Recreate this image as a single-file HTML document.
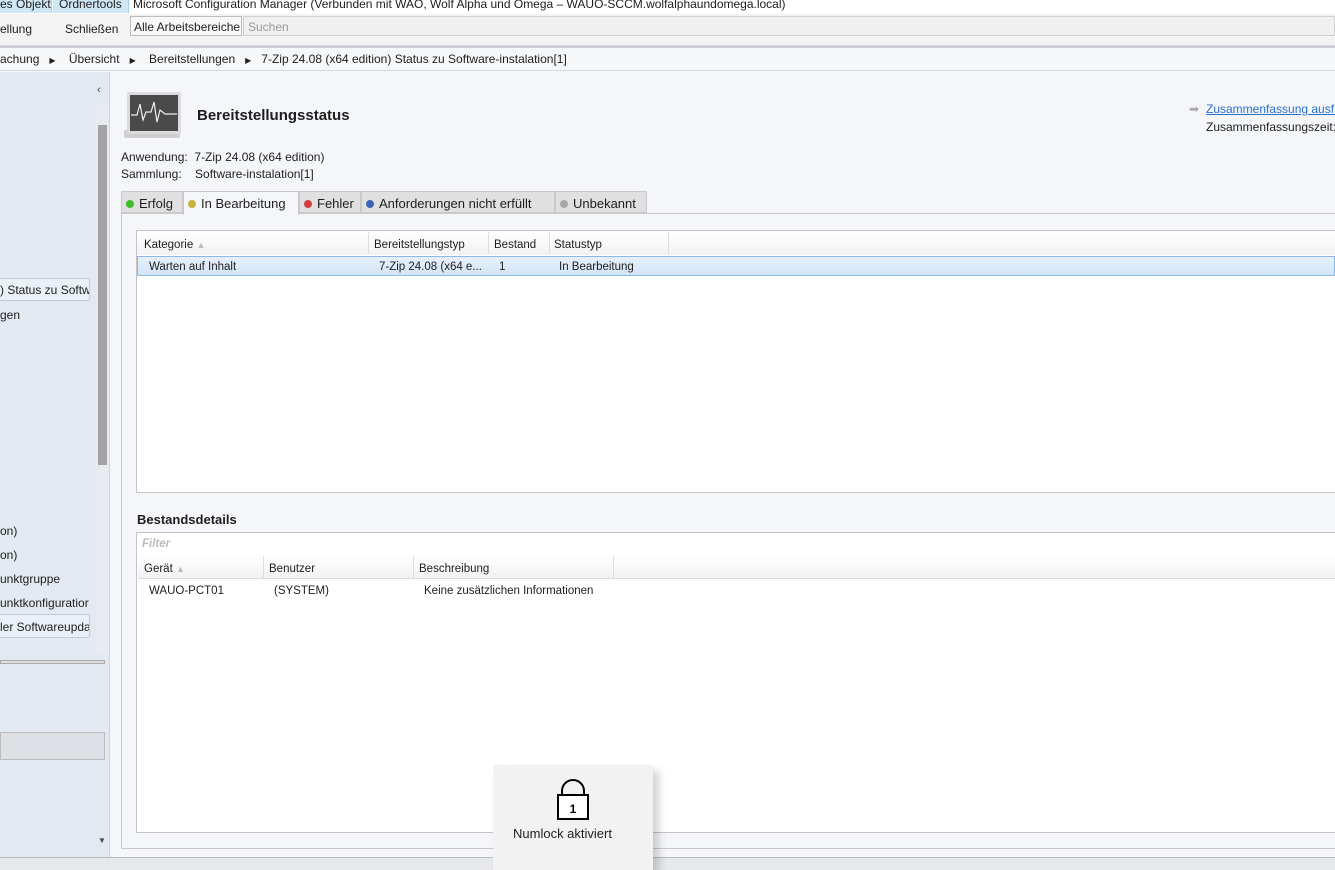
<!DOCTYPE html>
<html><head><meta charset="utf-8"><style>
*{box-sizing:border-box;margin:0;padding:0}
body{width:1335px;height:870px;overflow:hidden;position:relative;background:#f4f6fa;font-family:"Liberation Sans",sans-serif;font-size:12px;color:#1e1e1e}
.a{position:absolute;white-space:nowrap}
.dot{display:inline-block;width:8px;height:8px;border-radius:50%;margin-right:5px;vertical-align:0px}
</style></head><body>
<div class="a" style="left:0;top:0;width:1335px;height:14px;background:#fff"></div>
<div class="a" style="left:0;top:0;width:52px;height:13px;background:#cfe6f5;border-right:1px solid #a9cde8;font-size:12px;line-height:9px;padding-left:0">es Objekt</div>
<div class="a" style="left:53px;top:0;width:76px;height:13px;background:#cfe6f5;border-right:1px solid #a9cde8;line-height:9px;padding-left:6px">Ordnertools</div>
<div class="a" style="left:133px;top:0;line-height:9px">Microsoft Configuration Manager (Verbunden mit WAO, Wolf Alpha und Omega – WAUO-SCCM.wolfalphaundomega.local)</div>
<div class="a" style="left:0;top:14px;width:1335px;height:32px;background:#f3f3f3;border-bottom:1px solid #d6d6d6"></div>
<div class="a" style="left:0;top:22px">ellung</div>
<div class="a" style="left:65px;top:22px">Schließen</div>
<div class="a" style="left:130px;top:16px;width:112px;height:20px;border:1px solid #bdbdbd;background:#f8f8f8;padding:3px 0 0 3px">Alle Arbeitsbereiche</div>
<div class="a" style="left:243px;top:16px;width:1092px;height:20px;border:1px solid #d0d0d0;background:#f0f0f0;color:#999;padding:3px 0 0 4px">Suchen</div>
<div class="a" style="left:0;top:46px;width:1335px;height:2px;background:#c9ced6"></div>
<div class="a" style="left:0;top:48px;width:1335px;height:23px;background:#f6f7f9;border-bottom:1px solid #d4d8de"></div>
<div class="a" style="left:0;top:52px;">achung &nbsp;&nbsp;<span style="font-size:8px">▶</span>&nbsp;&nbsp;&nbsp; Übersicht &nbsp;&nbsp;<span style="font-size:8px">▶</span>&nbsp;&nbsp;&nbsp; Bereitstellungen &nbsp;&nbsp;<span style="font-size:8px">▶</span>&nbsp;&nbsp; 7-Zip 24.08 (x64 edition) Status zu Software-instalation[1]</div>
<div class="a" style="left:0;top:72px;width:110px;height:786px;background:#e3e9f1;border-right:1px solid #cfd5dd"></div>
<div class="a" style="left:97px;top:84px;font-size:11px;color:#444">‹</div>
<div class="a" style="left:96px;top:104px;width:13px;height:550px;background:#e8ebef"></div>
<div class="a" style="left:98px;top:125px;width:9px;height:340px;background:#a3a3a3"></div>
<div class="a" style="left:0;top:278px;width:90px;height:23px;border:1px solid #c3cad4;border-left:none;background:#eaf0f7;border-radius:0 3px 3px 0;padding:4px 0 0 0;overflow:hidden">) Status zu Softw</div>
<div class="a" style="left:0;top:308px">gen</div>
<div class="a" style="left:0;top:524px">on)</div>
<div class="a" style="left:0;top:548px">on)</div>
<div class="a" style="left:0;top:572px">unktgruppe</div>
<div class="a" style="left:0;top:596px;width:92px;overflow:hidden">unktkonfiguratior</div>
<div class="a" style="left:0;top:614px;width:90px;height:24px;border:1px solid #c3cad4;border-left:none;background:#eaf0f7;border-radius:0 3px 3px 0;padding:5px 0 0 0;overflow:hidden">ler Softwareupda</div>
<div class="a" style="left:0;top:660px;width:105px;height:4px;border:1px solid #aaa;background:#ddd"></div>
<div class="a" style="left:0;top:732px;width:105px;height:28px;border:1px solid #bbb;background:#dde1e6"></div>
<div class="a" style="left:98px;top:836px;font-size:8px;color:#444">▼</div>
<div class="a" style="left:0;top:857px;width:1335px;height:13px;background:#e6e8eb;border-top:1px solid #b8bcc2"></div>
<svg class="a" style="left:121px;top:90px" width="62" height="50" viewBox="0 0 62 50">
<rect x="3" y="40" width="56" height="8" rx="2" fill="#cfcfcf"/>
<rect x="6" y="2" width="54" height="42" rx="2" fill="#dcdcdc"/>
<rect x="9" y="5" width="48" height="36" fill="#4a4a4a"/>
<polyline points="10,25 16,25 19,14 22,30 25,22 30,22 33,12 36,32 39,20 44,24 56,24" fill="none" stroke="#eee" stroke-width="1.2"/>
</svg>
<div class="a" style="left:197px;top:107px;font-size:15px;font-weight:bold">Bereitstellungsstatus</div>
<div class="a" style="left:1189px;top:102px;color:#aaa;font-size:12px">➡</div>
<div class="a" style="left:1206px;top:102px;color:#2a6fcc;text-decoration:underline">Zusammenfassung ausfü</div>
<div class="a" style="left:1206px;top:120px">Zusammenfassungszeit: 2</div>
<div class="a" style="left:121px;top:150px">Anwendung:&nbsp; 7-Zip 24.08 (x64 edition)</div>
<div class="a" style="left:121px;top:167px">Sammlung:&nbsp;&nbsp;&nbsp; Software-instalation[1]</div>
<div class="a" style="left:121px;top:191px;height:22px;width:62px;background:#e0e0e0;border:1px solid #c9c9c9;padding:4px 0 0 4px;font-size:13px"><span class="dot" style="background:#3cbf2a"></span>Erfolg</div>
<div class="a" style="left:183px;top:191px;height:24px;width:116px;background:#f4f6fa;border:1px solid #c9c9c9;border-bottom:none;padding:4px 0 0 4px;font-size:13px;z-index:2"><span class="dot" style="background:#c8b33c"></span>In Bearbeitung</div>
<div class="a" style="left:299px;top:191px;height:22px;width:62px;background:#e0e0e0;border:1px solid #c9c9c9;padding:4px 0 0 4px;font-size:13px"><span class="dot" style="background:#d04040"></span>Fehler</div>
<div class="a" style="left:361px;top:191px;height:22px;width:194px;background:#e0e0e0;border:1px solid #c9c9c9;padding:4px 0 0 4px;font-size:13px"><span class="dot" style="background:#3b66b5"></span>Anforderungen nicht erfüllt</div>
<div class="a" style="left:555px;top:191px;height:22px;width:92px;background:#e0e0e0;border:1px solid #c9c9c9;padding:4px 0 0 4px;font-size:13px"><span class="dot" style="background:#a8a8a8"></span>Unbekannt</div>
<div class="a" style="left:121px;top:213px;width:1220px;height:636px;border:1px solid #c9c9c9;background:#f4f6fa"></div>
<div class="a" style="left:136px;top:230px;width:1200px;height:263px;border:1px solid #c4c4c4;background:#fff"></div>
<div class="a" style="left:137px;top:231px;width:1198px;height:24px;background:linear-gradient(#fff,#f2f2f2)"></div>
<div class="a" style="left:144px;top:239px;font-size:11.5px">Kategorie <span style="color:#bbb;font-size:9px">▲</span></div>
<div class="a" style="left:368px;top:232px;width:1px;height:22px;background:#ddd"></div>
<div class="a" style="left:374px;top:239px;font-size:11.5px">Bereitstellungstyp</div>
<div class="a" style="left:488px;top:232px;width:1px;height:22px;background:#ddd"></div>
<div class="a" style="left:494px;top:239px;font-size:11.5px">Bestand</div>
<div class="a" style="left:549px;top:232px;width:1px;height:22px;background:#ddd"></div>
<div class="a" style="left:554px;top:239px;font-size:11.5px">Statustyp</div>
<div class="a" style="left:668px;top:232px;width:1px;height:22px;background:#ddd"></div>
<div class="a" style="left:137px;top:256px;width:1198px;height:20px;background:linear-gradient(#e6f0fb,#d3e5f8);border:1px solid #8fb8e6"></div>
<div class="a" style="left:149px;top:261px;font-size:11.5px">Warten auf Inhalt</div>
<div class="a" style="left:379px;top:261px;font-size:11.5px">7-Zip 24.08 (x64 e...</div>
<div class="a" style="left:499px;top:261px;font-size:11.5px">1</div>
<div class="a" style="left:559px;top:261px;font-size:11.5px">In Bearbeitung</div>
<div class="a" style="left:137px;top:512px;font-size:13px;font-weight:bold">Bestandsdetails</div>
<div class="a" style="left:136px;top:532px;width:1200px;height:301px;border:1px solid #c4c4c4;background:#fff"></div>
<div class="a" style="left:142px;top:538px;font-size:11.5px;font-style:italic;font-weight:bold;color:#bbb">Filter</div>
<div class="a" style="left:138px;top:555px;width:1197px;height:24px;background:linear-gradient(#fff,#f2f2f2);border-bottom:1px solid #ddd"></div>
<div class="a" style="left:144px;top:563px;font-size:11.5px">Gerät <span style="color:#bbb;font-size:9px">▲</span></div>
<div class="a" style="left:263px;top:556px;width:1px;height:22px;background:#ddd"></div>
<div class="a" style="left:269px;top:563px;font-size:11.5px">Benutzer</div>
<div class="a" style="left:413px;top:556px;width:1px;height:22px;background:#ddd"></div>
<div class="a" style="left:419px;top:563px;font-size:11.5px">Beschreibung</div>
<div class="a" style="left:613px;top:556px;width:1px;height:22px;background:#ddd"></div>
<div class="a" style="left:149px;top:585px;font-size:11.5px">WAUO-PCT01</div>
<div class="a" style="left:274px;top:585px;font-size:11.5px">(SYSTEM)</div>
<div class="a" style="left:424px;top:585px;font-size:11.5px">Keine zusätzlichen Informationen</div>
<div class="a" style="left:493px;top:765px;width:160px;height:105px;background:#f2f2f2;box-shadow:6px 6px 8px rgba(0,0,0,.18)"></div>
<svg class="a" style="left:556px;top:779px" width="34" height="42" viewBox="0 0 34 42">
<path d="M6 16 V12 A11 11 0 0 1 28 12 V16" fill="none" stroke="#000" stroke-width="2"/>
<rect x="2" y="16" width="30" height="24" fill="#fff" stroke="#000" stroke-width="2"/>
<text x="17" y="34" font-family="Liberation Sans" font-size="12" font-weight="bold" text-anchor="middle">1</text>
</svg>
<div class="a" style="left:513px;top:826px;font-size:13px">Numlock aktiviert</div>
</body></html>
